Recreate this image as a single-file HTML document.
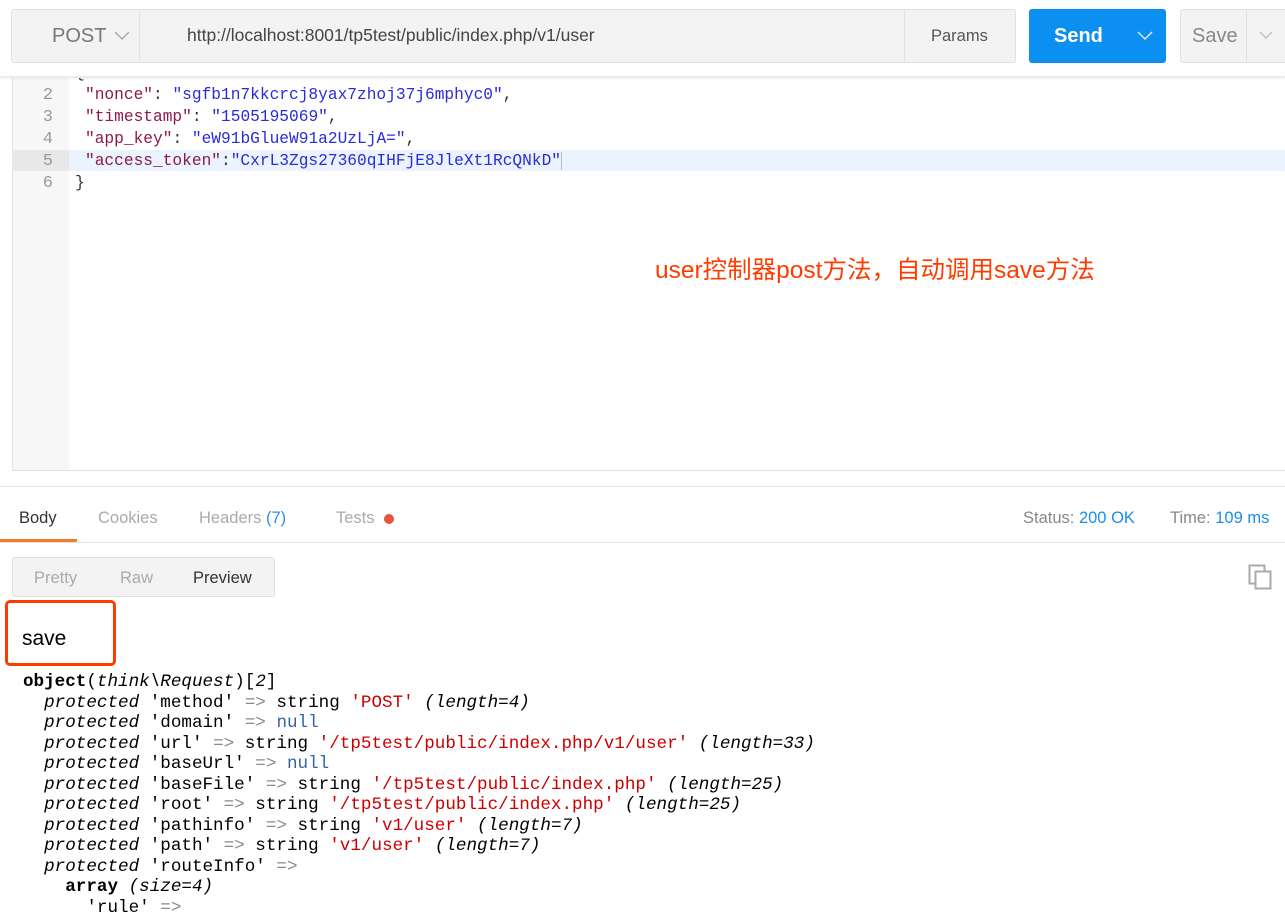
<!DOCTYPE html>
<html><head><meta charset="utf-8"><style>
*{margin:0;padding:0;box-sizing:border-box}
body{width:1285px;height:908px;overflow:hidden;background:#fff;font-family:"Liberation Sans","Noto Sans CJK SC",sans-serif;position:relative}
.a{position:absolute}
.mono{font-family:"Liberation Mono","DejaVu Sans Mono",monospace}
.ln{position:absolute;left:0;width:40px;text-align:right;color:#999;font-size:17px}
.cl{position:absolute;left:72px;font-size:16.2px;white-space:pre;color:#333}
.k{color:#8b1a4a}.s{color:#2b2bd8}
.x{position:absolute;left:0;font-size:17.6px;white-space:pre;color:#000;line-height:20px}
.i{font-style:italic}.r{color:#cc0000}.b{color:#3465a4}.g{color:#888a85}
</style></head><body>
<!-- editor -->
<div class="a" style="left:12px;top:70px;width:1273px;height:401px;border-left:1px solid #e6e6e6;border-bottom:1px solid #e0e0e0"></div>
<div class="a" style="left:13px;top:70px;width:56px;height:400px;background:#f7f7f7"></div>
<div class="a" style="left:13px;top:150px;width:56px;height:21px;background:#e8e8e8"></div>
<div class="a" style="left:69px;top:150px;width:1216px;height:21px;background:#ebf3fe"></div>
<div class="a mono" style="left:13px;top:0;">
<div class="ln" style="top:64px">1</div>
<div class="cl" style="top:64px;left:62px">{</div>
<div class="ln" style="top:86px">2</div>
<div class="ln" style="top:108px">3</div>
<div class="ln" style="top:130px">4</div>
<div class="ln" style="top:152px">5</div>
<div class="ln" style="top:174px">6</div>
<div class="cl" style="top:86px"><span class="k">"nonce"</span>: <span class="s">"sgfb1n7kkcrcj8yax7zhoj37j6mphyc0"</span>,</div>
<div class="cl" style="top:108px"><span class="k">"timestamp"</span>: <span class="s">"1505195069"</span>,</div>
<div class="cl" style="top:130px"><span class="k">"app_key"</span>: <span class="s">"eW91bGlueW91a2UzLjA="</span>,</div>
<div class="cl" style="top:152px"><span class="k">"access_token"</span>:<span class="s">"CxrL3Zgs27360qIHFjE8JleXt1RcQNkD"</span><span style="border-left:1px solid #bbb"> </span></div>
<div class="cl" style="top:174px;left:62px">}</div>
</div>
<!-- top bar -->
<div class="a" style="left:0;top:0;width:1285px;height:78px;background:#fff;border-bottom:2px solid #ececec;box-shadow:0 1px 2px rgba(0,0,0,0.05)"></div>
<div class="a" style="left:11px;top:9px;width:1005px;height:54px;background:#f3f3f3;border:1px solid #e2e2e2;border-radius:3px"></div>
<div class="a" style="left:139px;top:10px;width:1px;height:52px;background:#e2e2e2"></div>
<div class="a" style="left:904px;top:10px;width:1px;height:52px;background:#e2e2e2"></div>
<div class="a" style="left:52px;top:25px;font-size:20px;color:#777">POST</div>
<svg class="a" style="left:114px;top:31px" width="16" height="10"><path d="M1 1 L8 8 L15 1" stroke="#aaa" stroke-width="1.5" fill="none"/></svg>
<div class="a" style="left:187px;top:25px;font-size:17.5px;color:#444">http://localhost:8001/tp5test/public/index.php/v1/user</div>
<div class="a" style="left:931px;top:27px;font-size:16.5px;color:#555">Params</div>
<div class="a" style="left:1029px;top:9px;width:137px;height:54px;background:#0b8ff0;border-radius:3px"></div>
<div class="a" style="left:1054px;top:25px;font-size:20px;color:#fff;font-weight:bold">Send</div>
<svg class="a" style="left:1137px;top:31px" width="16" height="10"><path d="M1 1 L8 8 L15 1" stroke="#d7ebfb" stroke-width="1.5" fill="none"/></svg>
<div class="a" style="left:1180px;top:9px;width:120px;height:54px;background:#f3f3f3;border:1px solid #e2e2e2;border-radius:3px"></div>
<div class="a" style="left:1246px;top:10px;width:1px;height:52px;background:#e2e2e2"></div>
<div class="a" style="left:1192px;top:25px;font-size:20px;color:#888">Save</div>
<svg class="a" style="left:1259px;top:31px" width="14" height="10"><path d="M1 1 L7 7 L13 1" stroke="#bbb" stroke-width="1.3" fill="none"/></svg>
<div class="a" style="left:655px;top:251px;font-size:24.5px;color:#ff3c00;white-space:nowrap">user控制器post方法，自动调用save方法</div>
<!-- response tabs -->
<div class="a" style="left:0;top:486px;width:1285px;height:1px;background:#e6e6e6"></div>
<div class="a" style="left:0;top:542px;width:1285px;height:1px;background:#e3e3e3"></div>
<div class="a" style="left:0;top:539px;width:77px;height:3px;background:#f47b2a"></div>
<div class="a" style="left:19px;top:509px;font-size:16.5px;color:#333">Body</div>
<div class="a" style="left:98px;top:509px;font-size:16.5px;color:#aaa">Cookies</div>
<div class="a" style="left:199px;top:509px;font-size:16.5px;color:#aaa">Headers <span style="color:#2b8ee8">(7)</span></div>
<div class="a" style="left:336px;top:509px;font-size:16.5px;color:#aaa">Tests</div>
<div class="a" style="left:384px;top:514px;width:10px;height:10px;border-radius:50%;background:#e8533b"></div>
<div class="a" style="left:1023px;top:509px;font-size:16.5px;color:#888">Status: <span style="color:#1a8ef0">200 OK</span></div>
<div class="a" style="left:1170px;top:509px;font-size:16.5px;color:#888">Time: <span style="color:#1a8ef0">109 ms</span></div>
<div class="a" style="left:12px;top:557px;width:263px;height:40px;background:#f3f3f3;border:1px solid #e0e0e0;border-radius:3px"></div>
<div class="a" style="left:34px;top:569px;font-size:16.5px;color:#aaa">Pretty</div>
<div class="a" style="left:120px;top:569px;font-size:16.5px;color:#aaa">Raw</div>
<div class="a" style="left:193px;top:569px;font-size:16.5px;color:#333">Preview</div>
<svg class="a" style="left:1248px;top:564px" width="26" height="26"><rect x="1.5" y="1.5" width="15" height="18" fill="none" stroke="#aaa" stroke-width="2"/><rect x="7.5" y="7.5" width="15" height="17" fill="#fff" stroke="#aaa" stroke-width="2"/></svg>
<div class="a" style="left:5px;top:600px;width:111px;height:66px;border:3px solid #ff3c00;border-radius:5px"></div>
<div class="a" style="left:22px;top:627px;font-size:21px;color:#000">save</div>
<!-- dump -->
<div class="a mono" style="left:23px;top:672px">
<div class="x" style="top:0"><b>object</b>(<span class="i">think\Request</span>)[<span class="i">2</span>]</div>
<div class="x" style="top:20.5px">  <span class="i">protected</span> 'method' <span class="g">=&gt;</span> string <span class="r">'POST'</span> <span class="i">(length=4)</span></div>
<div class="x" style="top:41px">  <span class="i">protected</span> 'domain' <span class="g">=&gt;</span> <span class="b">null</span></div>
<div class="x" style="top:61.5px">  <span class="i">protected</span> 'url' <span class="g">=&gt;</span> string <span class="r">'/tp5test/public/index.php/v1/user'</span> <span class="i">(length=33)</span></div>
<div class="x" style="top:82px">  <span class="i">protected</span> 'baseUrl' <span class="g">=&gt;</span> <span class="b">null</span></div>
<div class="x" style="top:102.5px">  <span class="i">protected</span> 'baseFile' <span class="g">=&gt;</span> string <span class="r">'/tp5test/public/index.php'</span> <span class="i">(length=25)</span></div>
<div class="x" style="top:123px">  <span class="i">protected</span> 'root' <span class="g">=&gt;</span> string <span class="r">'/tp5test/public/index.php'</span> <span class="i">(length=25)</span></div>
<div class="x" style="top:143.5px">  <span class="i">protected</span> 'pathinfo' <span class="g">=&gt;</span> string <span class="r">'v1/user'</span> <span class="i">(length=7)</span></div>
<div class="x" style="top:164px">  <span class="i">protected</span> 'path' <span class="g">=&gt;</span> string <span class="r">'v1/user'</span> <span class="i">(length=7)</span></div>
<div class="x" style="top:184.5px">  <span class="i">protected</span> 'routeInfo' <span class="g">=&gt;</span></div>
<div class="x" style="top:205px">    <b>array</b> <span class="i">(size=4)</span></div>
<div class="x" style="top:225.5px">      'rule' <span class="g">=&gt;</span></div>
</div>
</body></html>
